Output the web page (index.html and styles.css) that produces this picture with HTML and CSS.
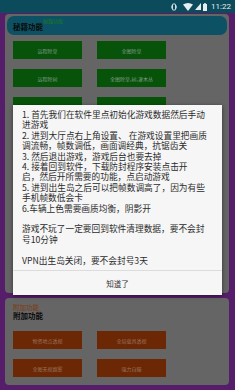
FILE: index.html
```html
<!DOCTYPE html>
<html>
<head>
<meta charset="utf-8">
<link rel="stylesheet" href="styles.css">
</head>
<body>
<div class="status">
  <div class="icons">
    <svg class="ic-vib" width="6" height="8" viewBox="0 0 6 8"><rect x="1.5" y="1" width="3" height="6" rx="0.5" fill="none" stroke="#e6eef0" stroke-width="0.9"/><path d="M0.4 2.5 L0.4 5.5 M5.6 2.5 L5.6 5.5" stroke="#e6eef0" stroke-width="0.7"/></svg>
    <svg class="ic-wifi" width="10" height="8" viewBox="0 0 10 8"><path d="M0 1.5 Q5 -1.5 10 1.5 L5 8 Z" fill="#e6eef0"/></svg>
    <svg class="ic-sig" width="6" height="7" viewBox="0 0 6 7"><path d="M6 0 L6 7 L0 7 Z" fill="#e6eef0"/></svg>
    <svg class="ic-bat" width="4" height="8" viewBox="0 0 4 8"><rect x="1.2" y="0" width="1.6" height="1" fill="#e6eef0"/><rect x="0" y="1" width="4" height="7" fill="#e6eef0"/></svg>
    <span class="time">11:22</span>
  </div>
</div>
<div class="main">
  <section class="card">
    <div class="card-head teal">
      <span class="ghost green">秘籍功能</span>
      <span class="title">秘籍功能</span>
    </div>
    <div class="grid">
      <div class="btn g">远程除草</div><div class="btn g">全图除草</div>
      <div class="btn g">远程除树</div><div class="btn g">全图除草,树,灌木丛</div>
      <div class="btn g">全图除树</div><div class="btn g">远程除石</div>
      <div class="btn g"></div><div class="btn g"></div>
      <div class="btn g"></div><div class="btn g"></div>
      <div class="btn g"></div><div class="btn g"></div>
      <div class="btn g"></div><div class="btn g"></div>
      <div class="btn g"></div><div class="btn g"></div>
      <div class="btn g"></div><div class="btn g"></div>
    </div>
  </section>
  <section class="card card2">
    <div class="card-head plain">
      <span class="ghost orange">附加功能</span>
      <span class="title">附加功能</span>
    </div>
    <div class="grid">
      <div class="btn o">物资地点透视</div><div class="btn o">全局载具透视</div>
      <div class="btn o">全图无视烟雾</div><div class="btn o">强力自瞄</div>
    </div>
  </section>
</div>
<div class="dialog">
  <div class="msg">1. 首先我们在软件里点初始化游戏数据然后手动<br>进游戏<br>2. 进到大厅点右上角设置、 在游戏设置里把画质<br>调流畅，帧数调低，画面调经典，抗锯齿关<br>3. 然后退出游戏，游戏后台也要去掉<br>4. 接着回到软件，下载防封程序安装点击开<br>启，然后开所需要的功能，点启动游戏<br>5. 进到出生岛之后可以把帧数调高了，因为有些<br>手机帧数低会卡<br>6.车辆上色需要画质均衡，阴影开<br><br>游戏不玩了一定要回到软件清理数据，要不会封<br>号10分钟<br><br>VPN出生岛关闭，要不会封号3天</div>
  <div class="actions"><span class="ok">知道了</span></div>
</div>
</body>
</html>
```
FILE: styles.css
```css
html, body {
  margin: 0;
  padding: 0;
}
body {
  width: 235px;
  height: 390px;
  overflow: hidden;
  background: #561d6a;
  font-family: "Noto Sans CJK SC", "Noto Sans", sans-serif;
  position: relative;
}
.status {
  height: 13px;
  background: #0b4b5c;
  display: flex;
  justify-content: flex-end;
  align-items: center;
}
.icons {
  display: flex;
  align-items: center;
  gap: 2px;
  padding-right: 4px;
}
.ic-vib { margin-right: 4px; }
.time {
  color: #e6eef0;
  font-family: "Roboto", "Noto Sans", sans-serif;
  font-size: 8px;
  line-height: 13px;
  margin-left: 2px;
}
.main {
  padding: 1px 6px 0 5px;
  display: flex;
  flex-direction: column;
  gap: 5px;
}
.card {
  background: #656565;
  border-radius: 4px;
  padding: 2px 2px 10px 2px;
}
.card-head {
  position: relative;
  height: 19px;
  border-radius: 7px;
}
.card-head.teal { background: #0d5264; }
.card-head .title {
  position: absolute;
  left: 6px;
  top: 6px;
  font-size: 7.5px;
  line-height: 9px;
  font-weight: bold;
  color: #0a0a0a;
}
.ghost {
  position: absolute;
  font-size: 5px;
  line-height: 6px;
}
.ghost.green { color: #1c7d1c; left: 36px; top: 2px; }
.card2 { padding-top: 3px; padding-bottom: 8px; }
.card-head.plain { height: 24px; }
.card-head.plain .title { top: 10px; }
.ghost.orange { color: #7e3a0e; left: 6px; top: 3px; font-size: 6.5px; line-height: 7px; }
.grid {
  display: grid;
  grid-template-columns: 69px 69px;
  column-gap: 15px;
  row-gap: 10px;
  padding-left: 6px;
  margin-top: 6px;
}
.btn {
  height: 18px;
  display: flex;
  align-items: center;
  justify-content: center;
  font-size: 5px;
  color: #85988a;
  white-space: nowrap;
}
.btn.g { background: #065309; }
.btn.o { background: #6c2704; color: #97735f; }
.dialog {
  position: absolute;
  left: 13px;
  top: 105px;
  width: 209px;
  height: 190px;
  background: #f6f6f6;
  box-shadow: 0 1px 4px rgba(0,0,0,0.5);
  display: flex;
  flex-direction: column;
}
.msg {
  padding: 5px 9px 0 9px;
  font-size: 8.7px;
  line-height: 10.4px;
  color: #2b2b2b;
  white-space: nowrap;
  height: 165px;
  box-sizing: border-box;
}
.actions {
  border-top: 1px solid #dcdcdc;
  flex: 1;
  display: flex;
  align-items: center;
  justify-content: center;
}
.ok {
  font-size: 7.5px;
  color: #333;
}
```
